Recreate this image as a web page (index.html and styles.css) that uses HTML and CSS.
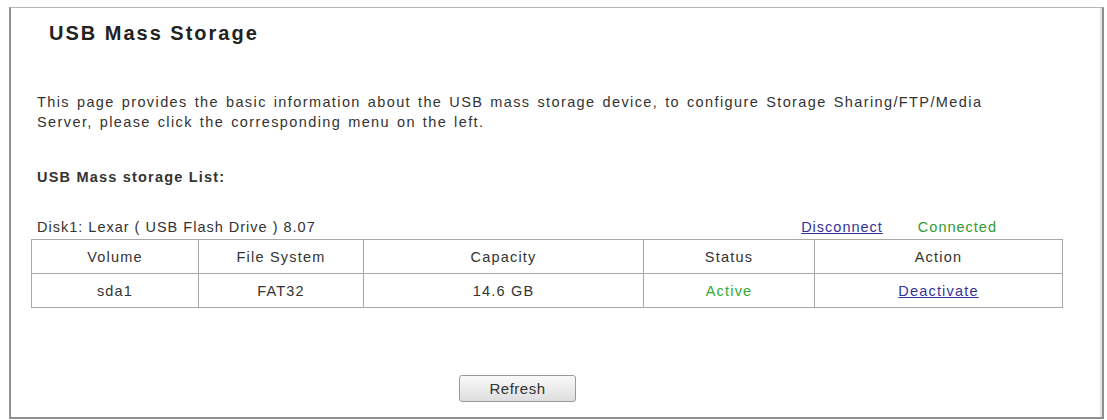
FILE: index.html
```html
<!DOCTYPE html>
<html lang="en">

<head>
    <meta charset="UTF-8">
    <title>USB Mass Storage</title>
    <link rel="stylesheet" href="styles.css">
</head>

<body>
    <div class="panel">
        <h1 class="title">USB Mass Storage</h1>

        <p class="intro">This page provides the basic information about the USB mass storage device, to configure Storage Sharing/FTP/Media
            Server, please click the corresponding menu on the left.</p>

        <p class="listTitle">USB Mass storage List:</p>

        <div class="diskLine">
            <span class="diskName">Disk1: Lexar ( USB Flash Drive ) 8.07</span>
            <a href="#" class="disconnect">Disconnect</a>
            <span class="connected">Connected</span>
        </div>

        <table class="volumes">
            <colgroup>
                <col style="width: 167px">
                <col style="width: 165px">
                <col style="width: 280px">
                <col style="width: 171px">
                <col style="width: 248px">
            </colgroup>
            <tr>
                <th>Volume</th>
                <th>File System</th>
                <th>Capacity</th>
                <th>Status</th>
                <th>Action</th>
            </tr>
            <tr>
                <td>sda1</td>
                <td>FAT32</td>
                <td>14.6 GB</td>
                <td class="active">Active</td>
                <td><a href="#">Deactivate</a></td>
            </tr>
        </table>

        <div class="buttons">
            <button class="refresh">Refresh</button>
        </div>
    </div>
</body>

</html>
```

FILE: styles.css
```css
body {
    margin: 0;
    background-color: #ffffff;
    font-family: 'Liberation Sans', Arial, sans-serif;
    color: #333333;
}

.panel {
    box-sizing: border-box;
    margin: 7px 0 0 9px;
    width: 1095px;
    height: 412px;
    padding: 0 0 0 20px;
    border-top: 1px solid #b5b5b5;
    border-left: 2px solid #8f8f8f;
    border-right: 2px solid #8f8f8f;
    border-bottom: 2px solid #8f8f8f;
    box-shadow: inset -2px 0 0 #e4e4e4;
}

.title {
    margin: 0;
    padding: 14px 0 0 18px;
    font-size: 20px;
    line-height: 22px;
    letter-spacing: 2px;
    font-weight: bold;
    color: #222222;
}

.intro,
.listTitle,
.diskLine,
.volumes {
    font-size: 14.5px;
    letter-spacing: 1.2px;
}

.intro {
    margin: 0;
    padding: 48px 0 0 6px;
    width: 985px;
    line-height: 20px;
    letter-spacing: 1.4px;
    word-spacing: 1.5px;
}

.listTitle {
    margin: 0;
    padding: 35px 0 0 6px;
    line-height: 20px;
    font-weight: bold;
}

.diskLine {
    display: flex;
    align-items: center;
    margin-top: 30px;
    padding-left: 6px;
    height: 20px;
    width: 960px;
    letter-spacing: 1px;
}

.diskName {
    flex: 1;
}

.disconnect {
    color: #333399;
    margin-right: 35px;
}

.connected {
    color: #339933;
}

.volumes {
    margin-top: 2px;
    width: 1031px;
    border-collapse: collapse;
    table-layout: fixed;
}

.volumes th,
.volumes td {
    height: 33px;
    padding: 0;
    border: 1px solid #a8a8a8;
    text-align: center;
    font-weight: normal;
    color: #333333;
}

.volumes td.active {
    color: #33aa33;
}

.volumes a {
    color: #333399;
}

.buttons {
    padding: 67px 0 0 428px;
}

.refresh {
    width: 117px;
    height: 27px;
    font-family: 'Liberation Sans', Arial, sans-serif;
    font-size: 15px;
    letter-spacing: 0.5px;
    color: #333333;
    border: 1px solid #9a9a9a;
    border-radius: 3px;
    background: linear-gradient(#fafafa, #dedede);
}
```
